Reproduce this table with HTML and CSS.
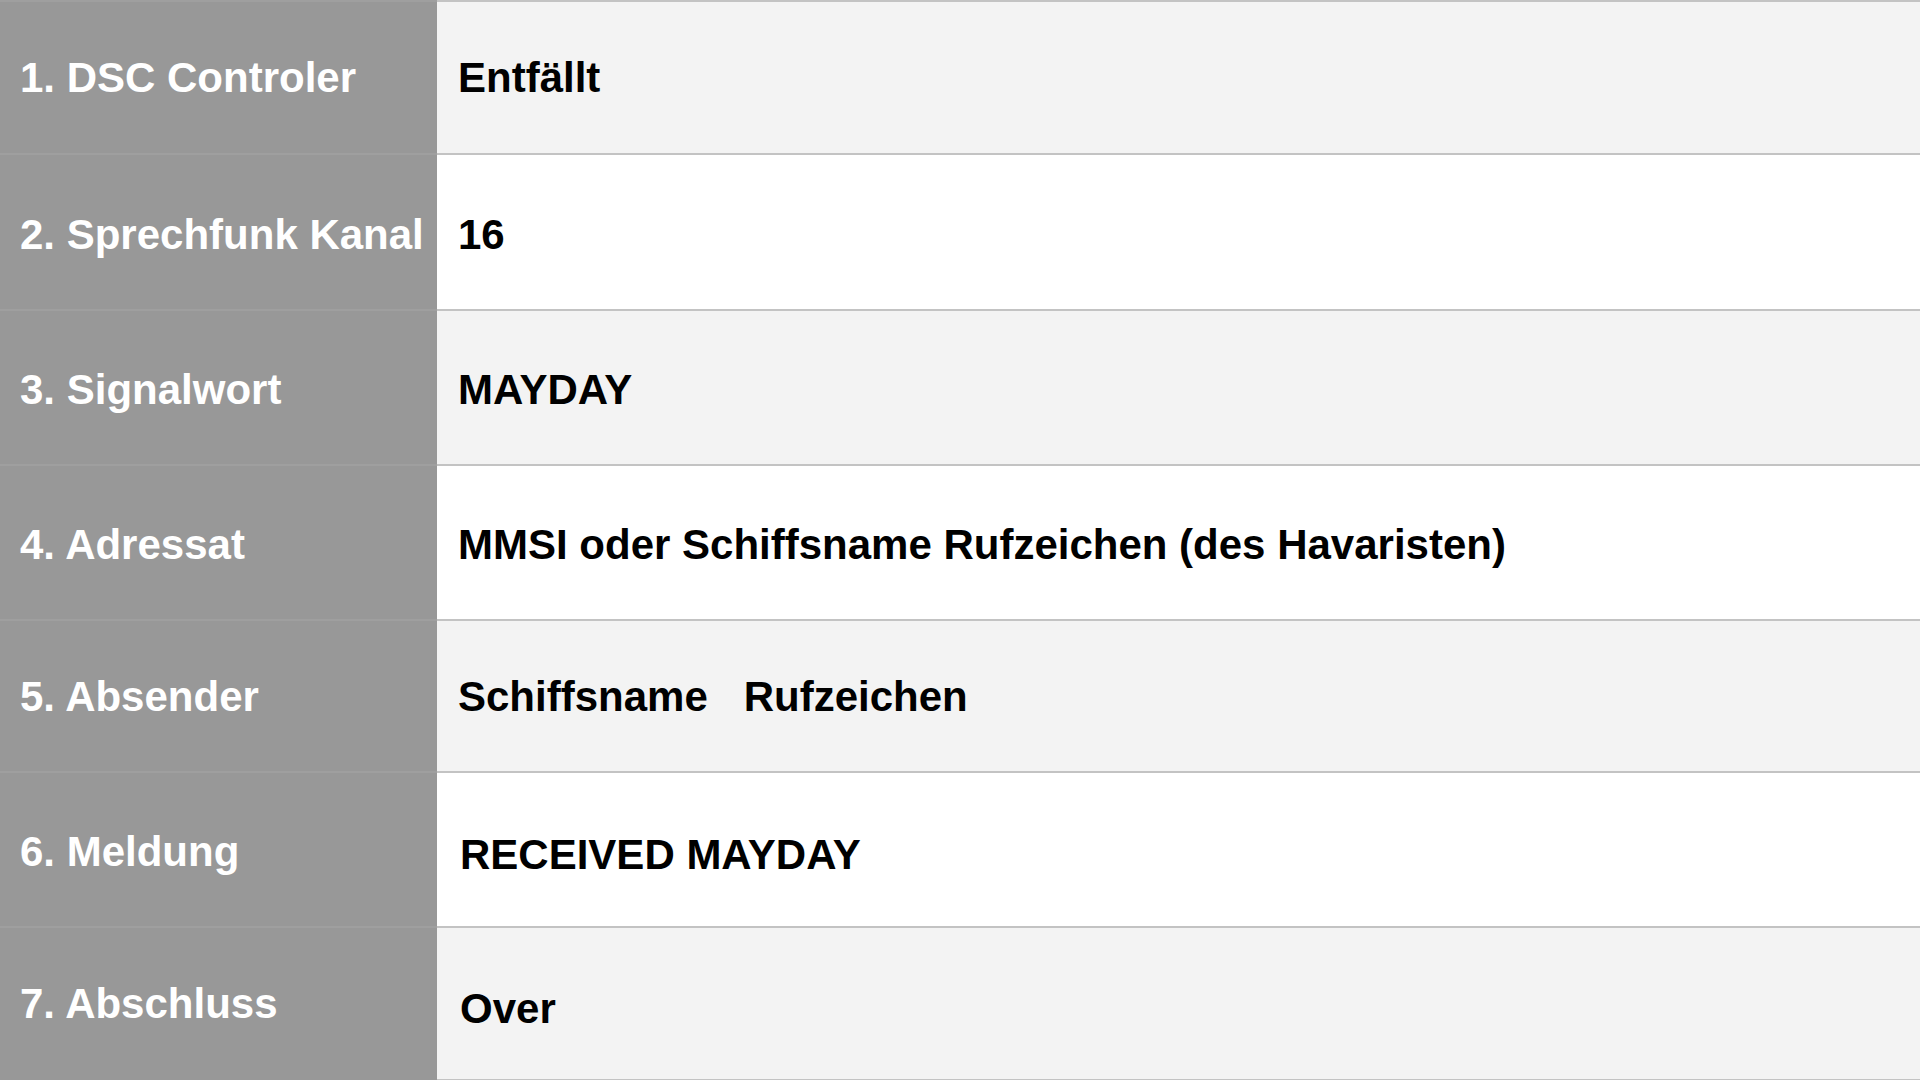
FILE: index.html
```html
<!DOCTYPE html>
<html lang="de">
<head>
<meta charset="utf-8">
<title>MAYDAY Bestätigung</title>
<link rel="stylesheet" href="styles.css">
</head>
<body>
<div class="table">
  <div class="row row-1">
    <div class="label">1. DSC Controler</div>
    <div class="value">Entfällt</div>
  </div>
  <div class="row row-2 white nudge">
    <div class="label">2. Sprechfunk Kanal</div>
    <div class="value">16</div>
  </div>
  <div class="row row-3 nudge">
    <div class="label">3. Signalwort</div>
    <div class="value">MAYDAY</div>
  </div>
  <div class="row row-4 white nudge">
    <div class="label">4. Adressat</div>
    <div class="value">MMSI oder Schiffsname Rufzeichen (des Havaristen)</div>
  </div>
  <div class="row row-5 nudge-small">
    <div class="label">5. Absender</div>
    <div class="value"><span>Schiffsname</span><span class="gap">Rufzeichen</span></div>
  </div>
  <div class="row row-6 white nudge">
    <div class="label">6. Meldung</div>
    <div class="value shifted">RECEIVED MAYDAY</div>
  </div>
  <div class="row row-7 last">
    <div class="label">7. Abschluss</div>
    <div class="value shifted">Over</div>
  </div>
</div>
</body>
</html>
```
FILE: styles.css
```css
html, body {
  margin: 0;
  padding: 0;
  width: 1920px;
  height: 1080px;
  overflow: hidden;
  background: #f3f3f3;
}

.table {
  display: flex;
  flex-direction: column;
  font-family: "Liberation Sans", Arial, Helvetica, sans-serif;
  font-weight: 700;
  font-size: 42px;
}

.row {
  display: grid;
  grid-template-columns: 437px 1fr;
  box-sizing: border-box;
}

.row-1 { height: 153px; }
.row-2 { height: 156px; }
.row-3 { height: 155px; }
.row-4 { height: 155px; }
.row-5 { height: 152px; }
.row-6 { height: 155px; }
.row-7 { height: 154px; }

.label {
  background: #989898;
  color: #ffffff;
  display: flex;
  align-items: center;
  padding-left: 20px;
  border-top: 2px solid #9f9f9f;
  white-space: nowrap;
  box-sizing: border-box;
}

.value {
  background: #f3f3f3;
  color: #000000;
  display: flex;
  align-items: center;
  padding-left: 21px;
  border-top: 2px solid #c3c3c3;
  white-space: nowrap;
  box-sizing: border-box;
}

.row.nudge .label,
.row.nudge .value {
  padding-top: 5px;
}

.row.nudge-small .label,
.row.nudge-small .value {
  padding-top: 2px;
}

.row.white .value {
  background: #ffffff;
}

.row.last .value {
  border-bottom: 1px solid #c3c3c3;
}

.row .value.shifted {
  padding-left: 23px;
  padding-top: 10px;
}

.gap {
  margin-left: 36px;
}
```
